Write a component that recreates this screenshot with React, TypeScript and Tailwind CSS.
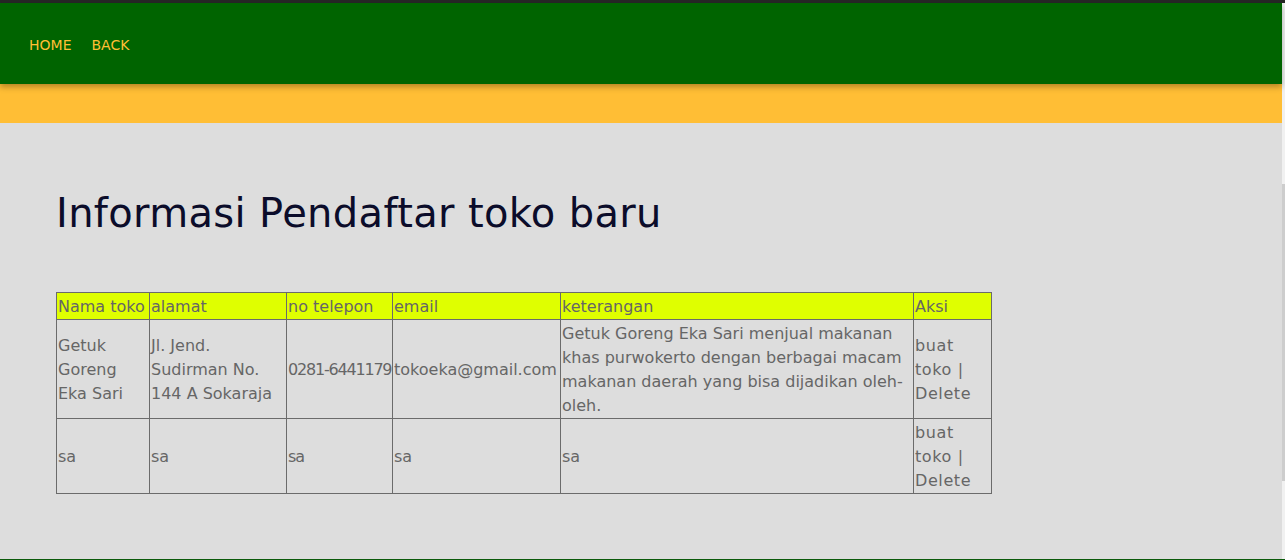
import React from 'react';

const rows = [
  {
    nama: 'Getuk Goreng Eka Sari',
    alamat: 'Jl. Jend. Sudirman No. 144 A Sokaraja',
    telp: '0281-6441179',
    email: 'tokoeka@gmail.com',
    ket: 'Getuk Goreng Eka Sari menjual makanan khas purwokerto dengan berbagai macam makanan daerah yang bisa dijadikan oleh-oleh.',
  },
  { nama: 'sa', alamat: 'sa', telp: 'sa', email: 'sa', ket: 'sa' },
];

const cell = 'border border-[#6b6b6b] px-px pt-[2px] pb-0 align-middle';

export default function App() {
  return (
    <div
      className="min-h-[560px] flex flex-col bg-[#dddddd]"
      style={{ fontFamily: '"DejaVu Sans", "Open Sans", sans-serif' }}
    >
      <div className="h-[3px] bg-[#262626]" />
      <div className="flex flex-1">
        <div className="flex-1 flex flex-col">
          <nav className="relative z-10 h-[81px] bg-[#006400] flex items-center gap-[20px] px-[29px] pt-[3px] shadow-[0_3px_6px_rgba(0,0,0,0.3)]">
            <a className="text-[14px] text-[#ffbf35]">HOME</a>
            <a className="text-[14px] text-[#ffbf35]">BACK</a>
          </nav>
          <div className="h-[39px] bg-[#ffbe35]" />
          <main className="flex-1 px-[56px] pt-[62px]">
            <h1 className="text-[40px] leading-[56px] text-[#0b0c2a] tracking-[0.35px]">
              Informasi Pendaftar toko baru
            </h1>
            <table className="mt-[51px] border-collapse table-fixed w-[935px] text-[16px] leading-[24px] text-[#666666]">
              <colgroup>
                <col className="w-[93px]" />
                <col className="w-[137px]" />
                <col className="w-[106px]" />
                <col className="w-[168px]" />
                <col className="w-[353px]" />
                <col className="w-[78px]" />
              </colgroup>
              <thead>
                <tr className="bg-[#dfff00] text-left">
                  {['Nama toko', 'alamat', 'no telepon', 'email', 'keterangan', 'Aksi'].map((h) => (
                    <th key={h} className={`${cell} font-normal whitespace-nowrap`}>
                      {h}
                    </th>
                  ))}
                </tr>
              </thead>
              <tbody>
                {rows.map((r, i) => (
                  <tr key={i}>
                    <td className={cell}>{r.nama}</td>
                    <td className={cell}>{r.alamat}</td>
                    <td className={`${cell} tracking-[-1.2px] whitespace-nowrap`}>{r.telp}</td>
                    <td className={cell}>{r.email}</td>
                    <td className={cell}>{r.ket}</td>
                    <td className={`${cell} tracking-[0.6px]`}>
                      <a>buat toko</a> | <a>Delete</a>
                    </td>
                  </tr>
                ))}
              </tbody>
            </table>
          </main>
        </div>
        <div className="w-[3px] bg-[#f1f1f1] flex flex-col">
          <div className="h-[181px]" />
          <div className="h-[297px] bg-[#cdcdcd]" />
        </div>
      </div>
      <div className="h-px bg-[#0a5a0a]" />
    </div>
  );
}
